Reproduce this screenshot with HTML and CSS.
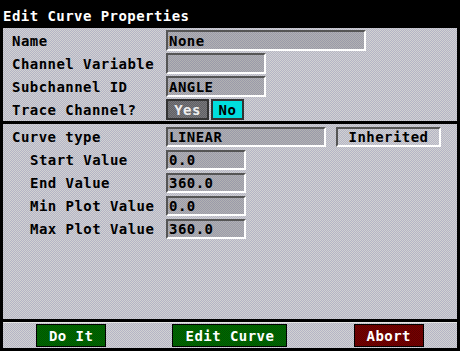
FILE: index.html
```html
<!DOCTYPE html>
<html lang="en">
<head>
  <meta charset="UTF-8" />
  <title>Edit Curve Properties</title>
  <link rel="stylesheet" href="styles.css">
</head>
<body>
  <div class="window">
    <div class="title">Edit Curve Properties</div>

    <div class="panel panel-top">
      <div class="row">
        <span class="label">Name</span>
        <span class="field w200">None</span>
      </div>
      <div class="row">
        <span class="label">Channel Variable</span>
        <span class="field w100"></span>
      </div>
      <div class="row">
        <span class="label">Subchannel ID</span>
        <span class="field w100">ANGLE</span>
      </div>
      <div class="row">
        <span class="label">Trace Channel?</span>
        <span class="toggle">
          <span class="opt opt-yes">Yes</span>
          <span class="opt opt-no">No</span>
        </span>
      </div>
    </div>

    <div class="panel panel-mid">
      <div class="row">
        <span class="label">Curve type</span>
        <span class="field w160">LINEAR</span>
        <span class="inherited">Inherited</span>
      </div>
      <div class="row">
        <span class="label sub">Start Value</span>
        <span class="field w80">0.0</span>
      </div>
      <div class="row">
        <span class="label sub">End Value</span>
        <span class="field w80">360.0</span>
      </div>
      <div class="row">
        <span class="label sub">Min Plot Value</span>
        <span class="field w80">0.0</span>
      </div>
      <div class="row">
        <span class="label sub">Max Plot Value</span>
        <span class="field w80">360.0</span>
      </div>
    </div>

    <div class="panel bar">
      <button class="btn go">Do It</button>
      <button class="btn go edit">Edit Curve</button>
      <button class="btn stop">Abort</button>
    </div>
  </div>
</body>
</html>
```

FILE: styles.css
```css
body {
  margin: 0;
  background: #000;
  font-family: 'DejaVu Sans Mono', 'Liberation Mono', monospace;
  font-size: 14px;
  font-weight: bold;
  letter-spacing: 0.45px;
  color: #000;
}

.window {
  width: 460px;
  height: 351px;
  background: #000;
  display: flex;
  flex-direction: column;
}

.title {
  height: 24px;
  padding: 4px 0 0 3px;
  line-height: 24px;
  color: #fff;
}

.panel {
  margin: 0 3px;
  background: repeating-conic-gradient(#d2d2d2 0 25%, #b4b4c6 0 50%) 0 0 / 2px 2px;
  box-sizing: border-box;
}

.panel-top {
  height: 93px;
  padding: 2px 0 0 9px;
  display: flex;
  flex-direction: column;
  gap: 2px;
}

.panel-top .row {
  height: 21px;
}

.panel-mid {
  height: 195px;
  margin-top: 3px;
  padding: 3px 0 0 9px;
  display: flex;
  flex-direction: column;
  gap: 3px;
}

.panel-mid .row {
  height: 20px;
}

.row {
  display: flex;
  align-items: stretch;
}

.label {
  width: 154px;
  display: flex;
  align-items: center;
  white-space: nowrap;
}

.label.sub {
  padding-left: 18px;
  width: 136px;
}

.field {
  box-sizing: border-box;
  display: flex;
  align-items: center;
  padding-left: 1px;
  border-style: solid;
  border-width: 2px;
  border-color: #555 #fff #fff #555;
  background: repeating-conic-gradient(#b2b2b2 0 25%, #9a9aaa 0 50%) 0 0 / 2px 2px;
}

.w200 { width: 200px; }
.w160 { width: 160px; }
.w100 { width: 100px; }
.w80 { width: 80px; }

.inherited {
  box-sizing: border-box;
  width: 105px;
  margin-left: 10px;
  display: flex;
  align-items: center;
  justify-content: center;
  border-style: solid;
  border-width: 2px;
  border-color: #555 #fff #fff #555;
}

.toggle {
  display: flex;
  gap: 2px;
}

.opt {
  box-sizing: border-box;
  display: flex;
  align-items: center;
  justify-content: center;
  border: 2px solid #333;
}

.opt-yes {
  width: 43px;
  color: #eee;
  background: repeating-conic-gradient(#7a7a7a 0 25%, #5e5e66 0 50%) 0 0 / 2px 2px;
}

.opt-no {
  width: 33px;
  background: #00dede;
}

.bar {
  height: 26px;
  margin-top: 3px;
  border-top: 1px solid #e4e4e4;
  display: flex;
  align-items: center;
  justify-content: space-around;
}

.btn {
  height: 23px;
  width: 70px;
  padding: 0;
  font: inherit;
  letter-spacing: inherit;
  color: #fff;
  border: 1px solid #000;
}

.btn.edit {
  width: 115px;
}

.go {
  background: repeating-conic-gradient(#006a00 0 25%, #005400 0 50%) 0 0 / 2px 2px;
}

.stop {
  background: repeating-conic-gradient(#760000 0 25%, #5e0000 0 50%) 0 0 / 2px 2px;
}
```
